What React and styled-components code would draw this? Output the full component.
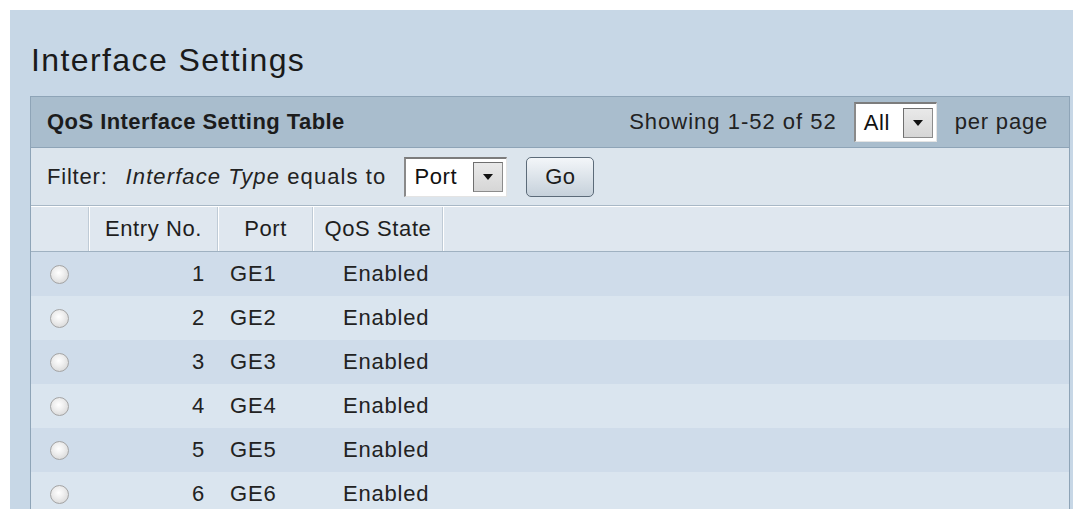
import React from "react";
import styled, { createGlobalStyle } from "styled-components";

const GlobalStyle = createGlobalStyle`
  html, body {
    margin: 0;
    padding: 0;
    background: #ffffff;
    overflow: hidden;
  }
  body {
    font-family: "Liberation Sans", Arial, sans-serif;
    color: #1e1e1e;
  }
`;

const Page = styled.div`
  margin: 10px 0 0 10px;
  min-height: 499px;
  background: #c7d7e6;
  padding: 32px 3px 0 20px;
  box-sizing: border-box;
`;

const Title = styled.h1`
  margin: 0 0 18px 1px;
  font-size: 32px;
  line-height: 36px;
  font-weight: normal;
  letter-spacing: 1.4px;
  color: #1a1a1a;
`;

const Panel = styled.div`
  border: 1px solid #8ea4b7;
  border-bottom: none;
  background: #dbe5ee;
`;

const Caption = styled.div`
  display: flex;
  align-items: center;
  height: 50px;
  padding: 0 21px 0 16px;
  background: #a9bdcd;
  border-bottom: 1px solid #8ea4b7;
`;

const CaptionTitle = styled.div`
  flex: 1;
  font-size: 22px;
  font-weight: bold;
  letter-spacing: 0.45px;
  color: #1c1c1c;
`;

const Label = styled.span`
  font-size: 22px;
  letter-spacing: ${(p) => p.$spacing || "0.8px"};
  color: #222;
  font-style: ${(p) => (p.$italic ? "italic" : "normal")};
  margin-right: ${(p) => p.$gap || "0"};
  white-space: pre;
`;

const SelectBox = styled.div`
  display: flex;
  align-items: center;
  justify-content: space-between;
  box-sizing: border-box;
  width: ${(p) => p.$width}px;
  height: 40px;
  padding: 2px 3px 2px 8px;
  background: #ffffff;
  border-top: 2px solid #7c7c7c;
  border-left: 2px solid #8a8a8a;
  border-right: 1px solid #e4e4e4;
  border-bottom: 1px solid #e4e4e4;
  margin-right: ${(p) => p.$gap || "0"};
  font-size: 22px;
  letter-spacing: 0.6px;
  color: #111;
`;

const DropButton = styled.div`
  width: 30px;
  height: 30px;
  box-sizing: border-box;
  display: flex;
  align-items: center;
  justify-content: center;
  background: linear-gradient(#e9e9e9, #d6d6d6);
  border: 1px solid #8c8c8c;
  border-top-color: #6f6f6f;
  border-left-color: #6f6f6f;
`;

const Arrow = () => (
  <svg width="10" height="6" viewBox="0 0 10 6">
    <path d="M0 0 L10 0 L5 6 Z" fill="#111" />
  </svg>
);

const Select = ({ value, width, gap }) => (
  <SelectBox $width={width} $gap={gap}>
    <span>{value}</span>
    <DropButton>
      <Arrow />
    </DropButton>
  </SelectBox>
);

const FilterBar = styled.div`
  display: flex;
  align-items: center;
  height: 57px;
  padding-left: 16px;
  background: #dce5ed;
  border-bottom: 1px solid #a8b8c6;
`;

const GoButton = styled.button`
  width: 68px;
  height: 40px;
  margin-left: 19px;
  padding: 0;
  border: 1px solid #5c6b79;
  border-radius: 5px;
  background: linear-gradient(#f3f6f9, #c6d1db);
  font-family: "Liberation Sans", Arial, sans-serif;
  font-size: 22px;
  letter-spacing: 0.6px;
  color: #1c1c1c;
`;

const columns = "58px 129px 95px 130px 1fr";

const HeadRow = styled.div`
  display: grid;
  grid-template-columns: ${columns};
  height: 44px;
  background: #dfe7ef;
  border-top: 1px solid #ffffff;
  border-bottom: 1px solid #9fb1c1;
`;

const HeadCell = styled.div`
  display: flex;
  align-items: center;
  justify-content: center;
  border-left: 1px solid #ffffff;
  border-right: 1px solid #bfcbd6;
  font-size: 22px;
  letter-spacing: 0.6px;
  color: #1e1e1e;
  &:first-child {
    border-left: none;
  }
  &:last-child {
    border-right: none;
  }
`;

const Row = styled.div`
  display: grid;
  grid-template-columns: ${columns};
  height: 44px;
  align-items: center;
  background: ${(p) => (p.$odd ? "#cfdcea" : "#dae5ef")};
  font-size: 22px;
  letter-spacing: 0.8px;
  color: #222;
`;

const Cell = styled.div`
  text-align: ${(p) => p.$align || "left"};
  padding: ${(p) => p.$pad || "0"};
  white-space: nowrap;
`;

const Radio = styled.span`
  display: block;
  width: 19px;
  height: 19px;
  margin-left: 19px;
  border-radius: 50%;
  box-sizing: border-box;
  border: 1px solid #a4a4a4;
  background: radial-gradient(circle at 45% 40%, #ffffff 0%, #eeeeee 40%, #cfcfcf 100%);
`;

const rows = [1, 2, 3, 4, 5, 6].map((n) => ({
  entry: n,
  port: `GE${n}`,
  state: "Enabled",
}));

export default function App() {
  return (
    <>
      <GlobalStyle />
      <Page>
        <Title>Interface Settings</Title>
        <Panel>
          <Caption>
            <CaptionTitle>QoS Interface Setting Table</CaptionTitle>
            <Label $gap="17px" $spacing="1px">Showing 1-52 of 52</Label>
            <Select value="All" width={83} gap="18px" />
            <Label>per page</Label>
          </Caption>
          <FilterBar>
            <Label $gap="18px">Filter:</Label>
            <Label $italic $spacing="1.1px">Interface Type</Label>
            <Label $gap="18px" $spacing="1.1px"> equals to</Label>
            <Select value="Port" width={103} />
            <GoButton>Go</GoButton>
          </FilterBar>
          <HeadRow>
            <HeadCell />
            <HeadCell>Entry No.</HeadCell>
            <HeadCell>Port</HeadCell>
            <HeadCell>QoS State</HeadCell>
            <HeadCell />
          </HeadRow>
          {rows.map((r, i) => (
            <Row key={r.entry} $odd={i % 2 === 0}>
              <Cell>
                <Radio />
              </Cell>
              <Cell $align="right" $pad="0 13px 0 0">{r.entry}</Cell>
              <Cell $pad="0 0 0 12px">{r.port}</Cell>
              <Cell $pad="0 0 0 30px">{r.state}</Cell>
              <Cell />
            </Row>
          ))}
        </Panel>
      </Page>
    </>
  );
}
